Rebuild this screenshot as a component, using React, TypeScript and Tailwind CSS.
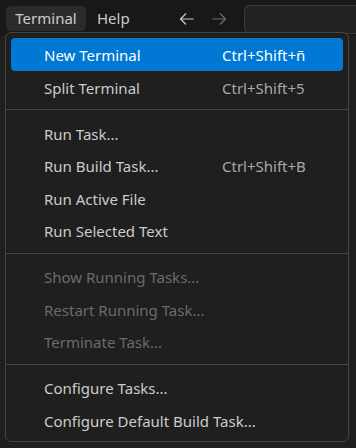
import React from "react";

type Item = { label: string; shortcut?: string; disabled?: boolean; active?: boolean } | "sep";

const items: Item[] = [
  { label: "New Terminal", shortcut: "Ctrl+Shift+ñ", active: true },
  { label: "Split Terminal", shortcut: "Ctrl+Shift+5" },
  "sep",
  { label: "Run Task..." },
  { label: "Run Build Task...", shortcut: "Ctrl+Shift+B" },
  { label: "Run Active File" },
  { label: "Run Selected Text" },
  "sep",
  { label: "Show Running Tasks...", disabled: true },
  { label: "Restart Running Task...", disabled: true },
  { label: "Terminate Task...", disabled: true },
  "sep",
  { label: "Configure Tasks..." },
  { label: "Configure Default Build Task..." },
];

export default function App() {
  return (
    <div
      className="relative w-[356px] h-[448px] overflow-hidden bg-[#1f1f1f] text-[15px]"
      style={{ fontFamily: '"Segoe UI", "Noto Sans", "Open Sans", sans-serif' }}
    >
      {/* Title bar */}
      <div className="flex h-[36px] items-start bg-[#181818] pt-[5px]">
        <div className="ml-[6px] mt-[1px] flex h-[25px] w-[80px] items-center justify-center rounded-[5px] bg-[#2b2b2b] text-[#cccccc]">
          Terminal
        </div>
        <div className="ml-[2px] mt-[1px] flex h-[25px] items-center px-[9px] text-[#cccccc]">Help</div>
        <div className="ml-[40px] mt-[1px] flex h-[25px] items-center gap-[16px]">
          <svg width="16" height="16" viewBox="0 0 16 16" fill="none" stroke="#cccccc" strokeWidth="1.2">
            <path d="M1.5 8h13M7 2.5 1.5 8 7 13.5" />
          </svg>
          <svg width="16" height="16" viewBox="0 0 16 16" fill="none" stroke="#6f6f6f" strokeWidth="1.2">
            <path d="M1.5 8h13M9 2.5 14.5 8 9 13.5" />
          </svg>
        </div>
        <div className="ml-[17px] h-[29px] flex-1 rounded-l-[6px] border border-r-0 border-[#3a3a3a] bg-[#222222]" />
      </div>

      {/* Menu */}
      <div className="absolute left-[5px] top-[32px] w-[344px] h-[410px] rounded-[6px] border border-[#454545] bg-[#1f1f1f] py-[5px]">
        {items.map((it, i) =>
          it === "sep" ? (
            <div key={i} className="flex h-[13.5px] flex-col justify-center">
              <div className="h-px bg-[#454545]" />
            </div>
          ) : (
            <div
              key={i}
              className={
                "mx-[5px] flex h-[32.5px] items-center rounded-[4px] pl-[33px] pt-[2px] " +
                (it.active
                  ? "bg-[#0078d4] text-white"
                  : it.disabled
                  ? "text-[#6b6b6b]"
                  : "text-[#cccccc]")
              }
            >
              <span className="w-[178px] shrink-0 whitespace-nowrap">{it.label}</span>
              {it.shortcut && (
                <span className={"whitespace-nowrap " + (it.active ? "text-white" : "text-[#a8a8a8]")}>
                  {it.shortcut}
                </span>
              )}
            </div>
          )
        )}
      </div>
    </div>
  );
}
